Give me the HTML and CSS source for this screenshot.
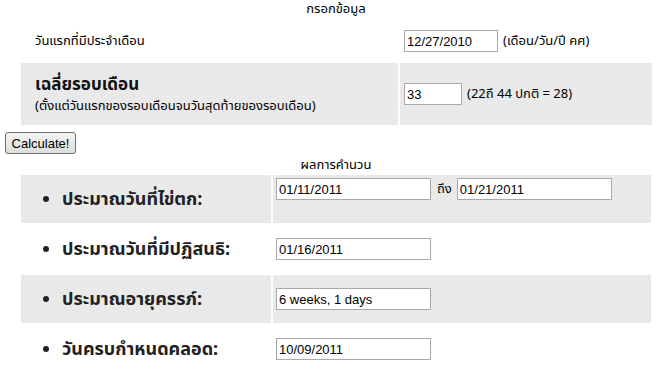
FILE: index.html
```html
<!DOCTYPE html>
<html lang="th">
<head>
    <meta charset="UTF-8">
    <meta name="viewport" content="width=device-width, initial-scale=1.0">
    <title>คำนวณวันตกไข่</title>
    <link rel="stylesheet" href="styles.css">
</head>
<body>
    <div class="heading">กรอกข้อมูล</div>
    <div class="form-grid">
        <div class="cell label-cell">วันแรกที่มีประจำเดือน</div>
        <div class="cell field-cell">
            <input type="text" class="date-input" value="12/27/2010">
            <span class="hint">(เดือน/วัน/ปี คศ)</span>
        </div>
        <div class="cell label-cell shaded">
            <div class="cycle-label">
                <div class="label-big">เฉลี่ยรอบเดือน</div>
                <div class="label-sub">(ตั้งแต่วันแรกของรอบเดือนจนวันสุดท้ายของรอบเดือน)</div>
            </div>
        </div>
        <div class="cell field-cell shaded">
            <input type="text" class="cycle-input" value="33">
            <span class="hint">(22ถึ 44 ปกติ = 28)</span>
        </div>
    </div>

    <button class="calc-btn">Calculate!</button>

    <div class="heading result-heading">ผลการคำนวน</div>
    <div class="result-grid">
        <div class="cell shaded">
            <ul class="result-label"><li>ประมาณวันที่ไข่ตก:</li></ul>
        </div>
        <div class="cell result-cell shaded top">
            <input type="text" class="result-input" value="01/11/2011">
            <span class="to">ถึง</span>
            <input type="text" class="result-input" value="01/21/2011">
        </div>
        <div class="cell">
            <ul class="result-label"><li>ประมาณวันที่มีปฏิสนธิ:</li></ul>
        </div>
        <div class="cell result-cell">
            <input type="text" class="result-input" value="01/16/2011">
        </div>
        <div class="cell shaded">
            <ul class="result-label"><li>ประมาณอายุครรภ์:</li></ul>
        </div>
        <div class="cell result-cell shaded">
            <input type="text" class="result-input" value="6 weeks, 1 days">
        </div>
        <div class="cell">
            <ul class="result-label"><li>วันครบกำหนดคลอด:</li></ul>
        </div>
        <div class="cell result-cell">
            <input type="text" class="result-input" value="10/09/2011">
        </div>
    </div>
</body>
</html>
```

FILE: styles.css
```css
body {
    margin: 0;
    padding: 0 5px;
    font-family: Tahoma, "Noto Sans Thai", "Noto Sans", "DejaVu Sans", sans-serif;
    font-size: 13px;
    color: #000;
    background-color: #fff;
}

.heading {
    text-align: center;
    padding-left: 14px;
    line-height: 16px;
    padding-top: 1px;
}

.form-grid {
    display: grid;
    grid-template-columns: 377px 252px;
    grid-template-rows: 40px 62px;
    gap: 2px;
    margin: 4px 0 0 16px;
}

.cell {
    display: flex;
    align-items: center;
}

.shaded {
    background-color: #e9e9e9;
}

.label-cell {
    padding-left: 14px;
}

.cycle-label {
    padding-top: 3px;
}

.label-big {
    font-size: 17px;
    font-weight: bold;
    line-height: 20px;
    color: #111;
}

.label-sub {
    margin-top: 2px;
    line-height: 19px;
}

.field-cell {
    padding-left: 4px;
}

input {
    font-family: "Liberation Sans", Arial, sans-serif;
    font-size: 13px;
    height: 22px;
    box-sizing: border-box;
    border: 1px solid #a9a9a9;
    padding: 1px 2px;
    margin: 0;
    color: #000;
    background-color: #fff;
}

.date-input {
    width: 94px;
}

.cycle-input {
    width: 58px;
}

.hint {
    margin-left: 5px;
}

.calc-btn {
    display: block;
    margin-top: 7px;
    height: 22px;
    width: 71px;
    padding: 0;
    font-family: "Liberation Sans", Arial, sans-serif;
    font-size: 13px;
    color: #000;
    border: 1px solid #707070;
    border-radius: 3px;
    background: linear-gradient(#f4f4f4, #dedede);
}

.result-heading {
    margin-top: 2px;
}

.result-grid {
    display: grid;
    grid-template-columns: 250px 378px;
    grid-auto-rows: 48px;
    gap: 2px;
    margin: 2px 0 0 16px;
}

.result-label {
    margin: 0;
    padding-left: 41px;
    font-size: 18px;
    font-weight: bold;
    color: #222;
}

.result-cell {
    padding-left: 3px;
}

.result-cell.top {
    align-items: flex-start;
    padding-top: 3px;
}

.result-input {
    width: 155px;
}

.to {
    margin: 0 5px 0 6px;
    line-height: 22px;
}
```
